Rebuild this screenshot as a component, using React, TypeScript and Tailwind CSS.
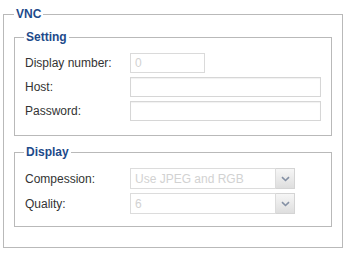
import React from "react";

function Chevron() {
  return (
    <svg width="9" height="6" viewBox="0 0 9 6" fill="none">
      <path d="M1 1.2 L4.5 4.5 L8 1.2" stroke="#8490a4" strokeWidth="1.6" />
    </svg>
  );
}

function SelectBox({ value }: { value: string }) {
  return (
    <div className="flex h-[21px] w-[165px]">
      <div className="flex flex-1 items-center border border-[#dcdcdc] bg-white pl-[4px] text-[12px] text-[#d2d2d2]">
        {value}
      </div>
      <div className="flex w-[19px] items-center justify-center border border-l-0 border-[#d4d4d4] bg-gradient-to-b from-[#f6f6f6] to-[#dedede]">
        <Chevron />
      </div>
    </div>
  );
}

function Row({ label, children }: { label: string; children: React.ReactNode }) {
  return (
    <div className="flex items-center">
      <div className="w-[105px] text-[12px] text-[#333]">{label}</div>
      {children}
    </div>
  );
}

export default function App() {
  return (
    <div className="h-[256px] w-[349px] bg-white pt-[7px] pl-[3px]" style={{ fontFamily: '"Liberation Sans", Arial, sans-serif' }}>
      <fieldset className="h-[241px] w-[340px] border border-[#b9b9b9] pl-[10px]">
        <legend className="ml-[0px] px-[2px] text-[12px] font-bold leading-[14px] text-[#1d4a8a]">VNC</legend>
        <fieldset className="mt-[9px] h-[106px] w-[318px] border border-[#b9b9b9] pl-[9px]">
          <legend className="px-[2px] text-[12px] font-bold leading-[14px] text-[#1d4a8a]">Setting</legend>
          <div className="mt-[9px] flex flex-col gap-[4px] pl-[1px]">
            <Row label="Display number:">
              <div className="flex h-[20px] w-[75px] items-center border border-[#dadada] bg-white pl-[4px] text-[12px] text-[#d2d2d2]">0</div>
            </Row>
            <Row label="Host:">
              <div className="h-[20px] w-[191px] border border-[#d6d6d6] bg-white shadow-[inset_0_1px_1px_rgba(0,0,0,0.06)]" />
            </Row>
            <Row label="Password:">
              <div className="h-[20px] w-[191px] border border-[#d6d6d6] bg-white shadow-[inset_0_1px_1px_rgba(0,0,0,0.06)]" />
            </Row>
          </div>
        </fieldset>
        <fieldset className="mt-[9px] h-[82px] w-[318px] border border-[#b9b9b9] pl-[9px]">
          <legend className="px-[2px] text-[12px] font-bold leading-[14px] text-[#1d4a8a]">Display</legend>
          <div className="mt-[9px] flex flex-col gap-[4px] pl-[1px]">
            <Row label="Compession:">
              <SelectBox value="Use JPEG and RGB" />
            </Row>
            <Row label="Quality:">
              <SelectBox value="6" />
            </Row>
          </div>
        </fieldset>
      </fieldset>
    </div>
  );
}
